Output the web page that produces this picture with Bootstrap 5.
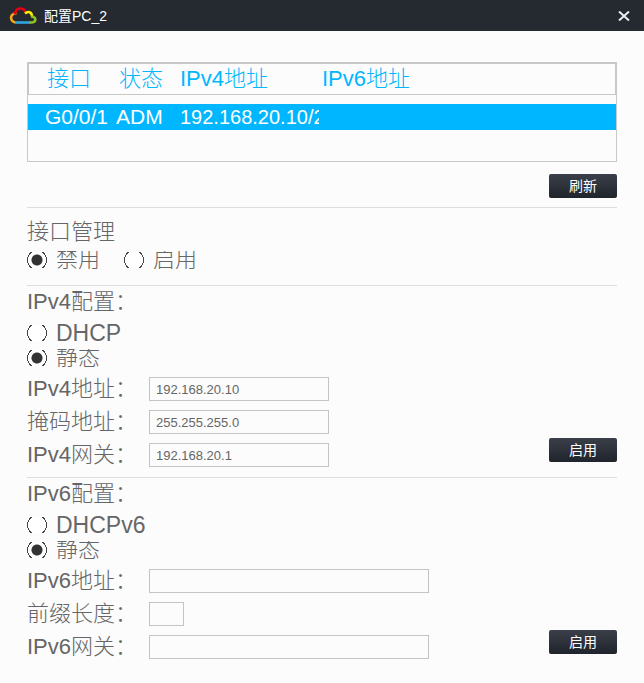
<!DOCTYPE html>
<html lang="zh-CN">
<head>
<meta charset="utf-8">
<meta name="viewport" content="width=device-width, initial-scale=1">
<title>配置PC_2</title>
<link href="https://cdn.jsdelivr.net/npm/bootstrap@5.3.0/dist/css/bootstrap.min.css" rel="stylesheet">
<style>
body { background: #fcfcfc; color: #666; font-family: "Liberation Sans", "Noto Sans CJK SC", sans-serif; font-size: 22px; font-weight: 300; line-height: 24px; }
.titlebar { background: #252930; height: 31px; padding: 0 14px 0 9px; }
.titlebar h1 { font-size: 14px; line-height: 20px; font-weight: 400; padding-left: 6px; }
.close-x { line-height: 0; }
.page-body { padding: 31px 27px 24px; }
.port-list { border: 1px solid #c8c8c8; height: 100px; }
.port-table { table-layout: fixed; border-collapse: separate; border-spacing: 0; width: 100%; }
.port-table th { height: 32px; padding: 0 0 0 3px; color: #00b7ff; font-weight: 300; line-height: 24px; border: solid #c8c8c8; border-width: 1px 0; white-space: nowrap; }
.port-table th:first-child { padding-left: 18px; border-left-width: 1px; }
.port-table th:last-child { border-right-width: 1px; }
.port-table tbody::before { content: ""; display: block; height: 9px; }
.port-table td { height: 26px; padding: 0; background: #00b7ff; color: #fff; font-size: 21px; line-height: 26px; overflow: hidden; white-space: nowrap; }
.port-table td:first-child { padding-left: 17px; }
.port-table td.col-addr { font-size: 20px; }
.port-table .col-addr { padding-left: 0; }
.col-port { width: 88px; }
.col-state { width: 64px; }
.col-v4 { width: 139px; }
.btn-dark-flat { width: 68px; height: 24px; padding: 0; border: 0; border-radius: 2px; color: #fff; font-size: 14px; line-height: 24px; background: linear-gradient(#3a3f49, #20242c); }
.btn-dark-flat:hover { color: #fff; background: #3a3f49; }
.refresh-row { padding: 12px 0 9px; }
.panel { border-top: 1px solid #ddd; padding: 4px 0 10px; }
.panel-port { padding: 12px 0 16px; }
.panel legend { float: none; font-size: 22px; line-height: 24px; margin: 0; }
.choices { display: flex; flex-direction: column; gap: 7px; padding: 10px 0; }
.panel-port .choices { flex-direction: row; gap: 24px; padding: 7px 0 0; }
.choice { display: flex; align-items: center; gap: 9px; height: 18px; overflow: hidden; }
.choice-latin { font-size: 23px; }
.choice input { appearance: none; flex: none; width: 20px; height: 16px; margin: 0; background: radial-gradient(circle, #fff 9px, #444 9px, #444 10px, transparent 10px); }
.choice input:checked { background: radial-gradient(circle, #333 5px, #fff 6px, #fff 9px, #444 9px, #444 10px, transparent 10px); }
.fields { display: grid; gap: 9px; }
.field-line { display: flex; align-items: center; height: 24px; }
.field-line label { width: 122px; white-space: nowrap; flex: none; }
.field-line .form-control { width: 180px; height: 24px; min-height: 0; padding: 0 6px; border: 1px solid #c4c4c4; border-radius: 0; background: #fcfcfc; color: #666; font-size: 13px; line-height: 22px; font-weight: 400; }
.field-line .form-control.wide { width: 280px; }
.field-line .form-control.tiny { width: 35px; }
.apply { margin-bottom: 5px; }
</style>
<script src="https://cdn.jsdelivr.net/npm/bootstrap@5.3.0/dist/js/bootstrap.bundle.min.js"></script>
</head>
<body>
<header class="titlebar d-flex align-items-center text-white">
  <svg width="29" height="18" viewBox="0 0 29 18" fill="none" stroke-width="2.6" aria-hidden="true">
    <path d="M7.500 6.500C1 6 0 14 6.500 15.500" stroke="#f5a81c"/>
    <path d="M6 7.500C6 0 15 0 16.500 5" stroke="#e60012"/>
    <path d="M16 6.500C19 4 23 4.500 23 9.500" stroke="#fff000"/>
    <path d="M22 9.500C28 10 27.500 15.500 22 15.500H20" stroke="#8fc31f"/>
    <path d="M6 15.500H20.500" stroke="#2ea7e0"/>
  </svg>
  <h1 class="m-0 flex-grow-1">配置PC_2</h1>
  <button type="button" class="btn p-0 border-0 text-white close-x" aria-label="关闭">
    <svg width="12" height="10" viewBox="0 0 12 10" stroke="#eee" stroke-width="2"><path d="M1 .5L11 9.500M11 .5L1 9.500"/></svg>
  </button>
</header>
<main class="page-body">
  <div class="port-list">
    <table class="port-table">
      <colgroup><col class="col-port"><col class="col-state"><col class="col-v4"><col></colgroup>
      <thead><tr><th>接口</th><th>状态</th><th class="col-addr">IPv4地址</th><th>IPv6地址</th></tr></thead>
      <tbody><tr><td>G0/0/1</td><td>ADM</td><td class="col-addr">192.168.20.10/24</td><td></td></tr></tbody>
    </table>
  </div>
  <div class="refresh-row d-flex justify-content-end">
    <button type="button" class="btn btn-dark-flat">刷新</button>
  </div>
  <form>
    <div class="panel panel-port"><fieldset>
      <legend>接口管理</legend>
      <div class="choices">
        <label class="choice"><input type="radio" name="port" checked>禁用</label>
        <label class="choice"><input type="radio" name="port">启用</label>
      </div>
    </fieldset></div>
    <div class="panel"><fieldset>
      <legend>IPv4配置：</legend>
      <div class="choices">
        <label class="choice choice-latin"><input type="radio" name="v4">DHCP</label>
        <label class="choice"><input type="radio" name="v4" checked>静态</label>
      </div>
      <div class="d-flex justify-content-between align-items-end">
        <div class="fields">
          <div class="field-line"><label for="v4a">IPv4地址：</label><input class="form-control" id="v4a" type="text" value="192.168.20.10"></div>
          <div class="field-line"><label for="v4m">掩码地址：</label><input class="form-control" id="v4m" type="text" value="255.255.255.0"></div>
          <div class="field-line"><label for="v4g">IPv4网关：</label><input class="form-control" id="v4g" type="text" value="192.168.20.1"></div>
        </div>
        <button type="button" class="btn btn-dark-flat apply">启用</button>
      </div>
    </fieldset></div>
    <div class="panel"><fieldset>
      <legend>IPv6配置：</legend>
      <div class="choices">
        <label class="choice choice-latin"><input type="radio" name="v6">DHCPv6</label>
        <label class="choice"><input type="radio" name="v6" checked>静态</label>
      </div>
      <div class="d-flex justify-content-between align-items-end">
        <div class="fields">
          <div class="field-line"><label for="v6a">IPv6地址：</label><input class="form-control wide" id="v6a" type="text"></div>
          <div class="field-line"><label for="v6p">前缀长度：</label><input class="form-control tiny" id="v6p" type="text"></div>
          <div class="field-line"><label for="v6g">IPv6网关：</label><input class="form-control wide" id="v6g" type="text"></div>
        </div>
        <button type="button" class="btn btn-dark-flat apply">启用</button>
      </div>
    </fieldset></div>
  </form>
</main>
</body>
</html>
